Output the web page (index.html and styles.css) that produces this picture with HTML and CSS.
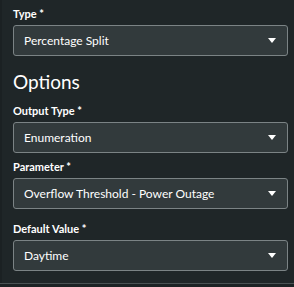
FILE: index.html
```html
<!DOCTYPE html>
<html lang="en">
<head>
	<meta charset="UTF-8">
	<title>Options</title>
	<link rel="stylesheet" href="styles.css">
</head>
<body>
	<div id="panel">
		<div class="field">
			<label class="label">Type *</label>
			<div class="select"><span>Percentage Split</span><i class="caret"></i></div>
		</div>
		<h2 class="section">Options</h2>
		<div class="field">
			<label class="label">Output Type *</label>
			<div class="select"><span>Enumeration</span><i class="caret"></i></div>
		</div>
		<div class="field field-wide">
			<label class="label">Parameter *</label>
			<div class="select"><span>Overflow Threshold - Power Outage</span><i class="caret"></i></div>
		</div>
		<div class="field">
			<label class="label">Default Value *</label>
			<div class="select"><span>Daytime</span><i class="caret"></i></div>
		</div>
	</div>
	<div id="footer"></div>
</body>
</html>
```

FILE: styles.css
```css
* {
	margin: 0;
	padding: 0;
	box-sizing: border-box;
	font-family: Lato, "Liberation Sans", sans-serif;
}
body {
	background: #1f2628;
	color: #fff;
	width: 294px;
	height: 287px;
	overflow: hidden;
}
#panel {
	height: 283px;
	padding: 6px 6px 0 11px;
	border-left: 2px solid #1b2123;
}
.field {
	margin-bottom: 6px;
}
.field-wide {
	margin-bottom: 12px;
}
.label {
	display: block;
	font-size: 11px;
	font-weight: bold;
	line-height: 15px;
	margin-bottom: 4px;
}
.select {
	height: 31px;
	display: flex;
	align-items: center;
	justify-content: space-between;
	padding: 0 11px 0 10px;
	background: #323a3c;
	border: 1px solid #7b8385;
	border-radius: 3px;
	font-size: 12px;
}
.caret {
	width: 0;
	height: 0;
	border-left: 4px solid transparent;
	border-right: 4px solid transparent;
	border-top: 5px solid #fff;
}
.section {
	font-size: 19px;
	font-weight: normal;
	line-height: 24px;
	margin: 14px 0 9px;
}
#footer {
	border-top: 1px solid #4a5254;
	height: 4px;
	background: #1c2224;
}
```
